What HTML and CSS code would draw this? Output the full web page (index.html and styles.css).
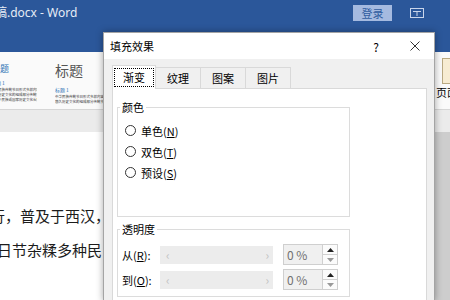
FILE: index.html
```html
<!DOCTYPE html>
<html lang="zh-CN">
<head>
  <meta charset="UTF-8">
  <title>填充效果</title>
  <link rel="stylesheet" href="styles.css">
</head>
<body>

<div class="word">
  <div class="titlebar">
    <span class="doc-title">稿.docx - Word</span>
    <span class="spacer"></span>
    <span class="login">登录</span>
    <svg class="ribbon-opt" width="14" height="10" viewBox="0 0 14 10">
      <rect x="0.5" y="0.5" width="13" height="9" fill="none" stroke="#c9d5ea"/>
      <path d="M3 3.5H11M7 3.5V8" stroke="#c9d5ea" fill="none"/>
    </svg>
  </div>

  <div class="ribbon">
    <div class="style-card first">
      <div class="style-head">标题</div>
      <div class="style-name">标题 1</div>
      <div class="style-lines">
        <div>中华民族传统节日形式多样内容丰富是我们</div>
        <div>悠久历史文化的组成部分传统节日的形成过程</div>
        <div>是一个民族或国家历史文化长期积淀凝聚的过</div>
      </div>
    </div>
    <div class="style-card second">
      <div class="style-title">标题</div>
      <div class="style-name">标题 1</div>
      <div class="style-lines">
        <div>中华民族传统节日形式多样内容丰富是我</div>
        <div>悠久历史文化的组成部分传统节日的形成</div>
      </div>
    </div>
    <span class="spacer"></span>
    <div class="page-setup">
      <span class="page-icon"></span>
      <span class="page-label">页面</span>
    </div>
  </div>

  <div class="ruler"></div>

  <div class="doc">
    <div class="page">
      <p class="line-one">行，普及于西汉，</p>
      <p class="line-two">日节杂糅多种民</p>
    </div>
  </div>
</div>

<div class="dialog">
  <div class="dialog-title">
    <span class="dialog-name">填充效果</span>
    <span class="spacer"></span>
    <span class="help">?</span>
    <svg class="close" width="10" height="10" viewBox="0 0 10 10">
      <path d="M0.5 0.5L9.5 9.5M9.5 0.5L0.5 9.5" stroke="#333" fill="none"/>
    </svg>
  </div>

  <div class="dialog-body">
    <div class="tabs">
      <div class="tab active"><span class="focus">渐变</span></div>
      <div class="tab">纹理</div>
      <div class="tab">图案</div>
      <div class="tab">图片</div>
    </div>

    <div class="panel">
      <fieldset class="group colors">
        <legend>颜色</legend>
        <div class="radio-row"><span class="radio"></span>单色(<u>N</u>)</div>
        <div class="radio-row"><span class="radio"></span>双色(<u>T</u>)</div>
        <div class="radio-row"><span class="radio"></span>预设(<u>S</u>)</div>
      </fieldset>

      <fieldset class="group alpha">
        <legend>透明度</legend>
        <div class="alpha-row">
          <span class="alpha-label">从(<u>R</u>):</span>
          <div class="slider"><span>&lsaquo;</span><span>&rsaquo;</span></div>
          <div class="spin">
            <span class="spin-value">0 %</span>
            <div class="spin-buttons">
              <span class="spin-up"><svg width="7" height="4" viewBox="0 0 7 4"><polygon points="0,4 7,4 3.5,0" fill="#222"/></svg></span>
              <span class="spin-down"><svg width="7" height="4" viewBox="0 0 7 4"><polygon points="0,0 7,0 3.5,4" fill="#999"/></svg></span>
            </div>
          </div>
        </div>
        <div class="alpha-row">
          <span class="alpha-label">到(<u>O</u>):</span>
          <div class="slider"><span>&lsaquo;</span><span>&rsaquo;</span></div>
          <div class="spin">
            <span class="spin-value">0 %</span>
            <div class="spin-buttons">
              <span class="spin-up"><svg width="7" height="4" viewBox="0 0 7 4"><polygon points="0,4 7,4 3.5,0" fill="#222"/></svg></span>
              <span class="spin-down"><svg width="7" height="4" viewBox="0 0 7 4"><polygon points="0,0 7,0 3.5,4" fill="#999"/></svg></span>
            </div>
          </div>
        </div>
      </fieldset>
    </div>
  </div>
</div>

</body>
</html>
```

FILE: styles.css
```css
body {
  margin: 0;
  width: 450px;
  height: 300px;
  overflow: hidden;
  position: relative;
  font-family: "Noto Sans CJK SC", "Noto Sans", sans-serif;
  color: #000;
}
.spacer {
  flex: 1;
}

/* word window behind the dialog */
.word {
  display: flex;
  flex-direction: column;
  height: 300px;
}
.titlebar {
  height: 52px;
  flex-shrink: 0;
  background-color: #2b579a;
  display: flex;
  align-items: flex-start;
}
.doc-title {
  margin-left: -5px;
  margin-top: 4px;
  font-family: "Noto Sans", sans-serif;
  font-size: 12px;
  line-height: 17px;
  color: #e6ecf6;
  white-space: nowrap;
}
.login {
  margin-top: 5px;
  width: 39px;
  height: 16px;
  background-color: #a5bae0;
  color: #2f5c9f;
  font-size: 11px;
  line-height: 16px;
  text-align: center;
}
.ribbon-opt {
  margin: 8px 26px 0 18px;
}
.ribbon {
  height: 57px;
  flex-shrink: 0;
  background-color: #fafafa;
  border-bottom: 1px solid #d6d6d6;
  display: flex;
  overflow: hidden;
}
.style-card {
  display: flex;
  flex-direction: column;
  color: #444;
  white-space: nowrap;
  overflow: hidden;
}
.style-card.first {
  width: 46px;
  padding-top: 12px;
  margin-left: -9px;
}
.style-card.second {
  width: 52px;
  margin-left: 18px;
  padding-top: 9px;
}
.style-head {
  font-size: 9px;
  line-height: 10px;
  color: #2e74b5;
}
.style-title {
  font-size: 14px;
  line-height: 18px;
  color: #555;
}
.style-name {
  font-size: 5px;
  line-height: 7px;
  color: #2e74b5;
}
.first .style-name {
  margin-top: 5px;
}
.second .style-name {
  margin-top: 7px;
}
.style-lines {
  margin-top: 1px;
  font-size: 3.5px;
  line-height: 5px;
  color: #333;
}
.page-setup {
  display: flex;
  flex-direction: column;
  margin-right: -12px;
  padding-top: 6px;
  width: 26px;
}
.page-icon {
  margin-left: 6px;
  width: 18px;
  height: 26px;
  background-color: #f7ecd2;
  border: 1px solid #b9a982;
  box-sizing: border-box;
}
.page-label {
  margin-top: 1px;
  font-size: 11px;
  line-height: 14px;
  white-space: nowrap;
}
.ruler {
  height: 22px;
  flex-shrink: 0;
  background-color: #ebebeb;
}
.doc {
  flex: 1;
  display: flex;
  background-color: #cdcdcd;
}
.page {
  width: 420px;
  background-color: #fff;
  padding-top: 67px;
  overflow: hidden;
}
.page p {
  margin: 0;
  font-size: 15px;
  line-height: 34px;
  color: #1c1c1c;
  white-space: nowrap;
}
.line-one {
  text-indent: -10px;
}
.line-two {
  text-indent: -3px;
}

/* fill effects dialog */
.dialog {
  position: absolute;
  left: 103px;
  top: 32px;
  width: 330px;
  height: 268px;
  overflow: hidden;
  border: 1px solid #a4a4a4;
  border-bottom: none;
  background-color: #f0f0f0;
  box-shadow: 0 0 7px rgba(0, 0, 0, 0.35);
  font-size: 11px;
}
.dialog-title {
  height: 26px;
  background-color: #fff;
  display: flex;
  align-items: center;
}
.dialog-name {
  margin-left: 6px;
}
.help {
  font-size: 12px;
  margin-right: 31px;
}
.close {
  margin-right: 14px;
}
.dialog-body {
  padding: 8px 7px 0 8px;
}
.tabs {
  display: flex;
  align-items: flex-start;
  height: 21px;
}
.tab {
  height: 20px;
  line-height: 20px;
  padding: 0 11px;
  border: 1px solid #d9d9d9;
  border-bottom: none;
  margin-left: -1px;
  background-color: #f0f0f0;
}
.tab.active {
  position: relative;
  z-index: 1;
  margin-left: 0;
  margin-top: -2px;
  height: 23px;
  padding: 0;
  background-color: #fff;
}
.focus {
  display: block;
  margin: 2px 1px 0 1px;
  padding: 0 8px;
  line-height: 17px;
  border: 1px dotted #000;
}
.panel {
  height: 230px;
  background-color: #fff;
  border: 1px solid #d9d9d9;
  padding: 0 4px;
}
.group {
  margin: 0;
  min-width: 0;
  width: 233px;
  box-sizing: border-box;
  border: 1px solid #dcdcdc;
  padding: 0;
}
.group legend {
  margin-left: 2px;
  padding: 0 2px;
  line-height: 15px;
}
.colors {
  margin-top: 11px;
  padding: 5px 0 33px 0;
}
.alpha {
  margin-top: 5px;
  padding: 7px 0 6px 0;
}
.radio-row {
  display: flex;
  align-items: center;
  height: 21px;
  margin-left: 7px;
}
.radio {
  width: 11px;
  height: 11px;
  box-sizing: border-box;
  border: 1px solid #333;
  border-radius: 50%;
  background-color: #fff;
  margin-right: 5px;
}
.alpha-row {
  display: flex;
  align-items: center;
  height: 21px;
}
.alpha-row + .alpha-row {
  margin-top: 4px;
}
.alpha-label {
  width: 38px;
  margin-left: 4px;
}
.slider {
  width: 113px;
  height: 18px;
  background-color: #ececec;
  display: flex;
  justify-content: space-between;
  align-items: center;
  padding: 0 4px 0 6px;
  box-sizing: border-box;
  color: #c2c2c2;
  font-size: 12px;
}
.spin {
  margin-left: 10px;
  width: 55px;
  height: 21px;
  box-sizing: border-box;
  border: 1px solid #cfcfcf;
  background-color: #f0f0f0;
  display: flex;
}
.spin-value {
  flex: 1;
  padding-left: 3px;
  line-height: 19px;
  color: #707070;
  font-size: 12px;
}
.spin-buttons {
  width: 14px;
  display: flex;
  flex-direction: column;
  border-left: 1px solid #d0d0d0;
  background-color: #fbfbfb;
}
.spin-up, .spin-down {
  flex: 1;
  display: flex;
  align-items: center;
  justify-content: center;
}
.spin-up {
  border-bottom: 1px solid #d0d0d0;
}
.spin-up svg, .spin-down svg {
  display: block;
}
```
